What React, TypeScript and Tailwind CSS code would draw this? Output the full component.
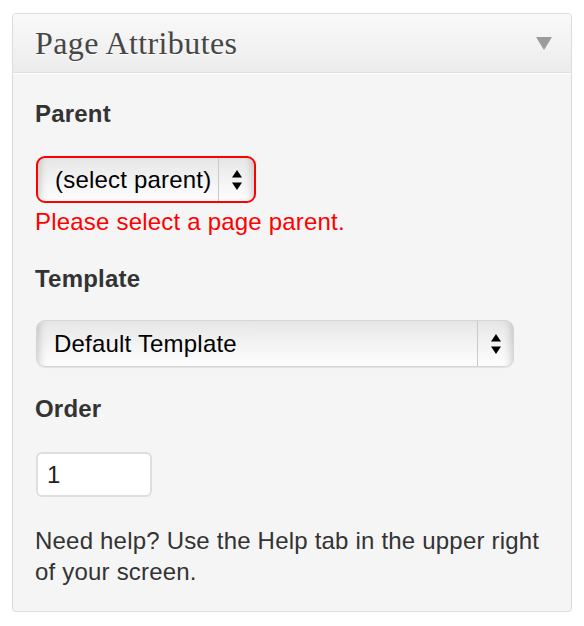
import React from "react";

function Arrows() {
  return (
    <svg width="12" height="22" viewBox="0 0 12 22" aria-hidden="true">
      <path d="M6 1 L11 8.5 L1 8.5 Z" fill="#000" />
      <path d="M1 13.5 L11 13.5 L6 21 Z" fill="#000" />
    </svg>
  );
}

function FakeSelect({
  label,
  widthClass,
  error,
}: {
  label: string;
  widthClass: string;
  error?: boolean;
}) {
  return (
    <div
      className={`${widthClass} ml-[1px] h-[47px] flex items-stretch rounded-[9px] overflow-hidden ${
        error
          ? "border-2 border-[#ff0000]"
          : "border border-[#d6d6d6] shadow-[0_1px_1px_rgba(0,0,0,0.08)]"
      } bg-[linear-gradient(to_bottom,#e6e6e6_0%,#efefef_35%,#f7f7f7_70%,#fdfdfd_100%)]`}
    >
      <div className="flex-1 flex items-center pl-[17px] text-[24px] tracking-[0.2px] text-black shadow-[inset_8px_0_8px_-6px_rgba(0,0,0,0.18)]">
        {label}
      </div>
      <div className="w-px bg-[#c9c9c9]" />
      <div className="w-[35px] flex items-center justify-center shadow-[inset_-8px_0_8px_-6px_rgba(0,0,0,0.18)]">
        <Arrows />
      </div>
    </div>
  );
}

export default function App() {
  return (
    <div className="min-h-[626px] bg-white pt-[13px] pl-[12px] font-['Liberation_Sans',Arial,sans-serif]">
      <div className="w-[560px] rounded-[4px] border border-[#dcdcdc] bg-[#f5f5f5] overflow-hidden">
        <div className="h-[59px] flex items-center justify-between pl-[22px] pr-[19px] border-b border-[#dfdfdf] bg-[linear-gradient(to_bottom,#f9f9f9,#ececec)]">
          <h3 className="font-['Liberation_Serif',Georgia,serif] text-[32px] leading-[58px] tracking-[0.4px] text-[#464646] [text-shadow:0_1px_0_#fff]">
            Page Attributes
          </h3>
          <svg width="16" height="13" viewBox="0 0 16 13" aria-hidden="true">
            <path d="M0 0 H16 L8 13 Z" fill="#9c9c9c" />
          </svg>
        </div>
        <div className="border-t border-white pt-[24px] pb-[24px] pl-[22px] pr-[20px] text-[24px] tracking-[0.2px] text-[#333]">
          <p className="font-bold leading-[32px]">Parent</p>
          <div className="mt-[26px]">
            <FakeSelect label="(select parent)" widthClass="w-[220px]" error />
          </div>
          <p className="mt-[3px] leading-[32px] text-[#ff0000]">
            Please select a page parent.
          </p>
          <p className="mt-[25px] font-bold leading-[32px]">Template</p>
          <div className="mt-[25px]">
            <FakeSelect label="Default Template" widthClass="w-[478px]" />
          </div>
          <p className="mt-[26px] font-bold leading-[32px]">Order</p>
          <div className="mt-[27px] ml-[1px] w-[116px] h-[45px] rounded-[6px] border-2 border-[#dedede] bg-white flex items-center pl-[9px] text-[24px] text-[#222]">
            1
          </div>
          <p className="mt-[28px] leading-[31px]">
            Need help? Use the Help tab in the upper right of your screen.
          </p>
        </div>
      </div>
    </div>
  );
}
